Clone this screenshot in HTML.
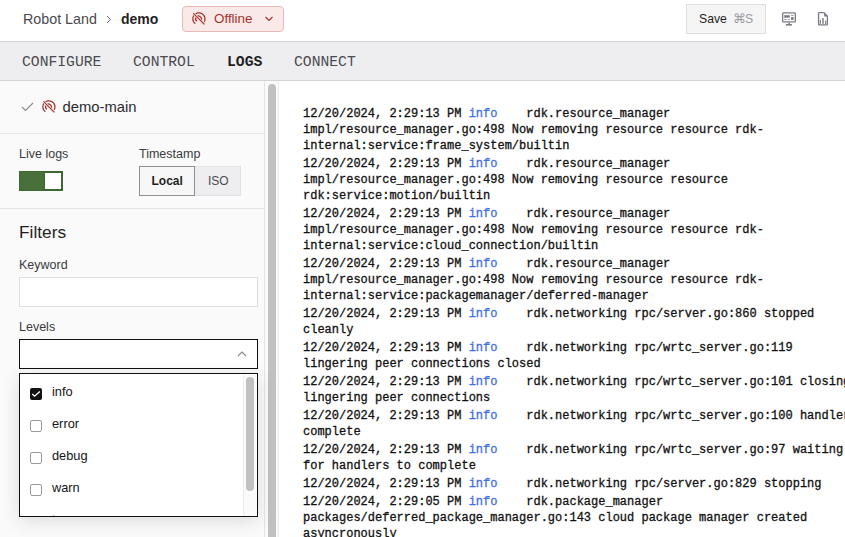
<!DOCTYPE html>
<html><head><meta charset="utf-8">
<style>
*{box-sizing:border-box;margin:0;padding:0}
html,body{width:845px;height:537px;overflow:hidden;background:#fff;font-family:"Liberation Sans",sans-serif;color:#1f1f23}
.abs{position:absolute}
#hdr{position:absolute;left:0;top:0;width:845px;height:41px;background:#fff}
#hline{position:absolute;left:0;top:41px;width:845px;height:1px;background:#d4d4d8}
#tabs{position:absolute;left:0;top:42px;width:845px;height:38px;background:#eeeef0}
#tline{position:absolute;left:0;top:80px;width:845px;height:1px;background:#d4d4d8}
.tab{position:absolute;top:1px;line-height:38px;font-family:"Liberation Mono",monospace;font-size:14.7px;color:#4b4b52;white-space:pre}
#side{position:absolute;left:0;top:81px;width:264px;height:456px;background:#fafafa}
#sbor{position:absolute;left:264px;top:81px;width:1px;height:456px;background:#e4e4e8}
#strack{position:absolute;left:265px;top:81px;width:14px;height:456px;background:#fafafa}
#sthumb{position:absolute;left:268px;top:84px;width:8px;height:460px;background:#c1c1c1;border-radius:4px}
#sbor2{position:absolute;left:278px;top:81px;width:1px;height:456px;background:#ececec}
.lbl{position:absolute;font-size:12.5px;color:#3a3a40;white-space:pre}
.div{position:absolute;left:0;width:264px;height:1px;background:#e4e4ea}
#logs{position:absolute;left:303px;top:106px;font-family:"Liberation Mono",monospace;font-size:12px;line-height:16px;color:#111;-webkit-text-stroke:0.3px #111}
#logs .e{margin-bottom:2px;white-space:pre}
#logs .i{color:#3f6fe6;-webkit-text-stroke:0.3px #3f6fe6}
.cb{position:absolute;left:30px;width:12px;height:12px;border:1.5px solid #9a9aa2;border-radius:2px;background:#fff}
.it{position:absolute;left:52px;font-size:12.8px;color:#141416;white-space:pre}
</style></head><body>
<div id="hdr">
  <div class="abs" style="left:23px;top:11px;font-size:14.3px;line-height:17px;color:#4a4a50;white-space:pre">Robot Land</div>
  <svg class="abs" style="left:105px;top:13px" width="8" height="12" viewBox="0 0 8 12"><path d="M2 3 L5.5 6.5 L2 10" fill="none" stroke="#6b6b72" stroke-width="1"/></svg>
  <div class="abs" style="left:121px;top:11px;font-size:14px;line-height:17px;font-weight:bold;color:#1f1f23;white-space:pre">demo</div>
  <div class="abs" style="left:182px;top:6px;width:102px;height:26px;background:#f9eae9;border:1px solid #e8b9b5;border-radius:4px"></div>
  <svg class="abs" style="left:189px;top:9px" width="20" height="20" viewBox="0 0 20 20"><defs><mask id="m1"><rect width="20" height="20" fill="#fff"/><path d="M3 3 L17 17" stroke="#000" stroke-width="2.6"/></mask></defs><g fill="none" stroke="#a8322c" stroke-width="1.3"><g mask="url(#m1)"><path d="M6.28 14.81 A6.1 6.1 0 1 1 15.13 13.03"/><path d="M7.83 12.3 A2.9 2.9 0 1 1 12.24 11.19"/></g><path d="M4.4 4.4 L15.4 15.4"/></g></svg>
  <div class="abs" style="left:214px;top:10px;font-size:13.4px;line-height:17px;color:#a8322c;white-space:pre">Offline</div>
  <svg class="abs" style="left:264px;top:15px" width="10" height="8" viewBox="0 0 10 8"><path d="M1.5 2 L5 5.5 L8.5 2" fill="none" stroke="#a8322c" stroke-width="1.2"/></svg>
  <div class="abs" style="left:686px;top:4px;width:80px;height:30px;background:#f5f5f6;border:1px solid #dedee1"></div>
  <div class="abs" style="left:699px;top:11px;font-size:12.2px;line-height:17px;color:#1f1f23;white-space:pre">Save</div>
  <div class="abs" style="left:733px;top:11px;font-size:12.5px;line-height:17px;color:#9a9aa2;white-space:pre">⌘</div><div class="abs" style="left:745px;top:11px;font-size:12.2px;line-height:17px;color:#9a9aa2;white-space:pre">S</div>
  <svg class="abs" style="left:781px;top:11px" width="16" height="16" viewBox="0 0 16 16"><rect x="1.65" y="1.85" width="12.7" height="9.1" rx="0.8" fill="none" stroke="#7b7b85" stroke-width="1.3"/><g fill="#7b7b85"><rect x="3.2" y="4.2" width="5.6" height="2.5"/><rect x="3.2" y="8.1" width="2.4" height="0.8"/><rect x="7" y="8.1" width="1.8" height="0.8"/><rect x="10" y="4.3" width="2.7" height="0.7"/><rect x="10" y="6.1" width="2.7" height="2.8"/><rect x="7.4" y="11.5" width="1.4" height="1.5"/><rect x="4.9" y="13" width="6" height="1.6"/></g></svg>
  <svg class="abs" style="left:817px;top:11px" width="13" height="16" viewBox="0 0 13 16"><path d="M2.3 1.65 H7.1 L10.35 5.1 V13.2 A0.75 0.75 0 0 1 9.6 13.95 H2.3 A0.75 0.75 0 0 1 1.55 13.2 V2.4 A0.75 0.75 0 0 1 2.3 1.65 Z" fill="none" stroke="#7b7b85" stroke-width="1.3" stroke-linejoin="round"/><g fill="#7b7b85"><path d="M7.1 1.5 V5.6 H11 Z"/><rect x="2.8" y="8.8" width="1.1" height="4.1"/><rect x="5.3" y="7" width="1.4" height="5.9"/><rect x="8" y="9.8" width="1.2" height="3.1"/></g></svg>
</div>
<div id="hline"></div>
<div id="tabs">
  <div class="tab" style="left:22px">CONFIGURE</div>
  <div class="tab" style="left:133px">CONTROL</div>
  <div class="tab" style="left:227px;font-weight:bold;color:#1f1f23">LOGS</div>
  <div class="tab" style="left:294px">CONNECT</div>
</div>
<div id="tline"></div>

<div id="side"></div>
<div id="sbor"></div><div id="strack"></div><div id="sthumb"></div><div id="sbor2"></div>

<svg class="abs" style="left:21px;top:102px" width="13" height="10" viewBox="0 0 13 10"><path d="M1 5 L4.5 8.5 L12 1" fill="none" stroke="#8a8a92" stroke-width="1.2"/></svg>
<svg class="abs" style="left:39px;top:97px" width="20" height="20" viewBox="0 0 20 20"><defs><mask id="m2"><rect width="20" height="20" fill="#fff"/><path d="M3 3 L17 17" stroke="#000" stroke-width="2.6"/></mask></defs><g fill="none" stroke="#a8322c" stroke-width="1.3"><g mask="url(#m2)"><path d="M6.28 14.81 A6.1 6.1 0 1 1 15.13 13.03"/><path d="M7.83 12.3 A2.9 2.9 0 1 1 12.24 11.19"/></g><path d="M4.4 4.4 L15.4 15.4"/></g></svg>
<div class="abs" style="left:62.5px;top:99px;font-size:14.8px;line-height:17px;color:#2a2a2f;white-space:pre">demo-main</div>
<div class="div" style="top:133px"></div>

<div class="lbl" style="left:19px;top:147px">Live logs</div>
<div class="abs" style="left:19px;top:171px;width:44px;height:20px;background:#47703b;border:1px solid #3c672f"></div>
<div class="abs" style="left:44px;top:172px;width:18px;height:18px;background:#3c672f"></div><div class="abs" style="left:45px;top:173px;width:16px;height:16px;background:#fff"></div>
<div class="lbl" style="left:139px;top:147px">Timestamp</div>
<div class="abs" style="left:195px;top:166px;width:46px;height:30px;background:#eeeef0;border:1px solid #e2e2e6;border-left:none"></div>
<div class="abs" style="left:139px;top:166px;width:56px;height:30px;background:#f7f7f8;border:1px solid #8e8e95"></div>
<div class="abs" style="left:151.5px;top:174px;font-size:12px;line-height:15px;font-weight:bold;color:#1f1f23;white-space:pre">Local</div>
<div class="abs" style="left:208px;top:174px;font-size:12px;line-height:15px;color:#4a4a50;white-space:pre">ISO</div>
<div class="div" style="top:208px"></div>

<div class="abs" style="left:19px;top:222px;font-size:17.3px;line-height:20px;color:#1f1f23;white-space:pre">Filters</div>
<div class="lbl" style="left:19px;top:258px">Keyword</div>
<div class="abs" style="left:19px;top:277px;width:239px;height:30px;background:#fff;border:1px solid #dedee2"></div>
<div class="lbl" style="left:19px;top:320px">Levels</div>
<div class="abs" style="left:19px;top:339px;width:239px;height:30px;background:#fff;border:1.5px solid #111"></div>
<svg class="abs" style="left:237px;top:350px" width="10" height="8" viewBox="0 0 10 8"><path d="M1 6 L5 2 L9 6" fill="none" stroke="#86868e" stroke-width="1.1"/></svg>

<div class="abs" style="left:19px;top:373px;width:239px;height:144px;background:#fff;border:1.5px solid #111;box-shadow:0 4px 18px rgba(0,0,0,0.12);overflow:hidden">
</div>
<div class="abs" style="left:242.5px;top:374.5px;width:14px;height:141px;background:#fafafa;border-left:1px solid #ececec"></div>
<div class="abs" style="left:246px;top:377px;width:8px;height:114px;background:#c1c1c1;border-radius:4px"></div>
<div class="abs" style="left:30px;top:388px;width:12px;height:12px;background:#111;border-radius:2px"></div>
<svg class="abs" style="left:30px;top:388px" width="12" height="12" viewBox="0 0 12 12"><path d="M2.2 6 L4.6 8.2 L9.9 3.4" fill="none" stroke="#fff" stroke-width="1.3"/></svg>
<div class="it" style="top:384px">info</div>
<div class="cb" style="top:420px"></div><div class="it" style="top:416px">error</div>
<div class="cb" style="top:452px"></div><div class="it" style="top:448px">debug</div>
<div class="cb" style="top:484px"></div><div class="it" style="top:480px">warn</div>
<div class="abs" style="left:20.5px;top:505px;width:222px;height:10.5px;overflow:hidden"><div class="it" style="left:31.5px;top:7px">trace</div></div>

<div id="logs">
<div class="e">12/20/2024, 2:29:13 PM <span class="i">info</span>    rdk.resource_manager
impl/resource_manager.go:498 Now removing resource resource rdk-
internal:service:frame_system/builtin</div>
<div class="e">12/20/2024, 2:29:13 PM <span class="i">info</span>    rdk.resource_manager
impl/resource_manager.go:498 Now removing resource resource
rdk:service:motion/builtin</div>
<div class="e">12/20/2024, 2:29:13 PM <span class="i">info</span>    rdk.resource_manager
impl/resource_manager.go:498 Now removing resource resource rdk-
internal:service:cloud_connection/builtin</div>
<div class="e">12/20/2024, 2:29:13 PM <span class="i">info</span>    rdk.resource_manager
impl/resource_manager.go:498 Now removing resource resource rdk-
internal:service:packagemanager/deferred-manager</div>
<div class="e">12/20/2024, 2:29:13 PM <span class="i">info</span>    rdk.networking rpc/server.go:860 stopped
cleanly</div>
<div class="e">12/20/2024, 2:29:13 PM <span class="i">info</span>    rdk.networking rpc/wrtc_server.go:119
lingering peer connections closed</div>
<div class="e">12/20/2024, 2:29:13 PM <span class="i">info</span>    rdk.networking rpc/wrtc_server.go:101 closing
lingering peer connections</div>
<div class="e">12/20/2024, 2:29:13 PM <span class="i">info</span>    rdk.networking rpc/wrtc_server.go:100 handlers
complete</div>
<div class="e">12/20/2024, 2:29:13 PM <span class="i">info</span>    rdk.networking rpc/wrtc_server.go:97 waiting
for handlers to complete</div>
<div class="e">12/20/2024, 2:29:13 PM <span class="i">info</span>    rdk.networking rpc/server.go:829 stopping</div>
<div class="e">12/20/2024, 2:29:05 PM <span class="i">info</span>    rdk.package_manager
packages/deferred_package_manager.go:143 cloud package manager created
asyncronously</div>
</div>
</body></html>
